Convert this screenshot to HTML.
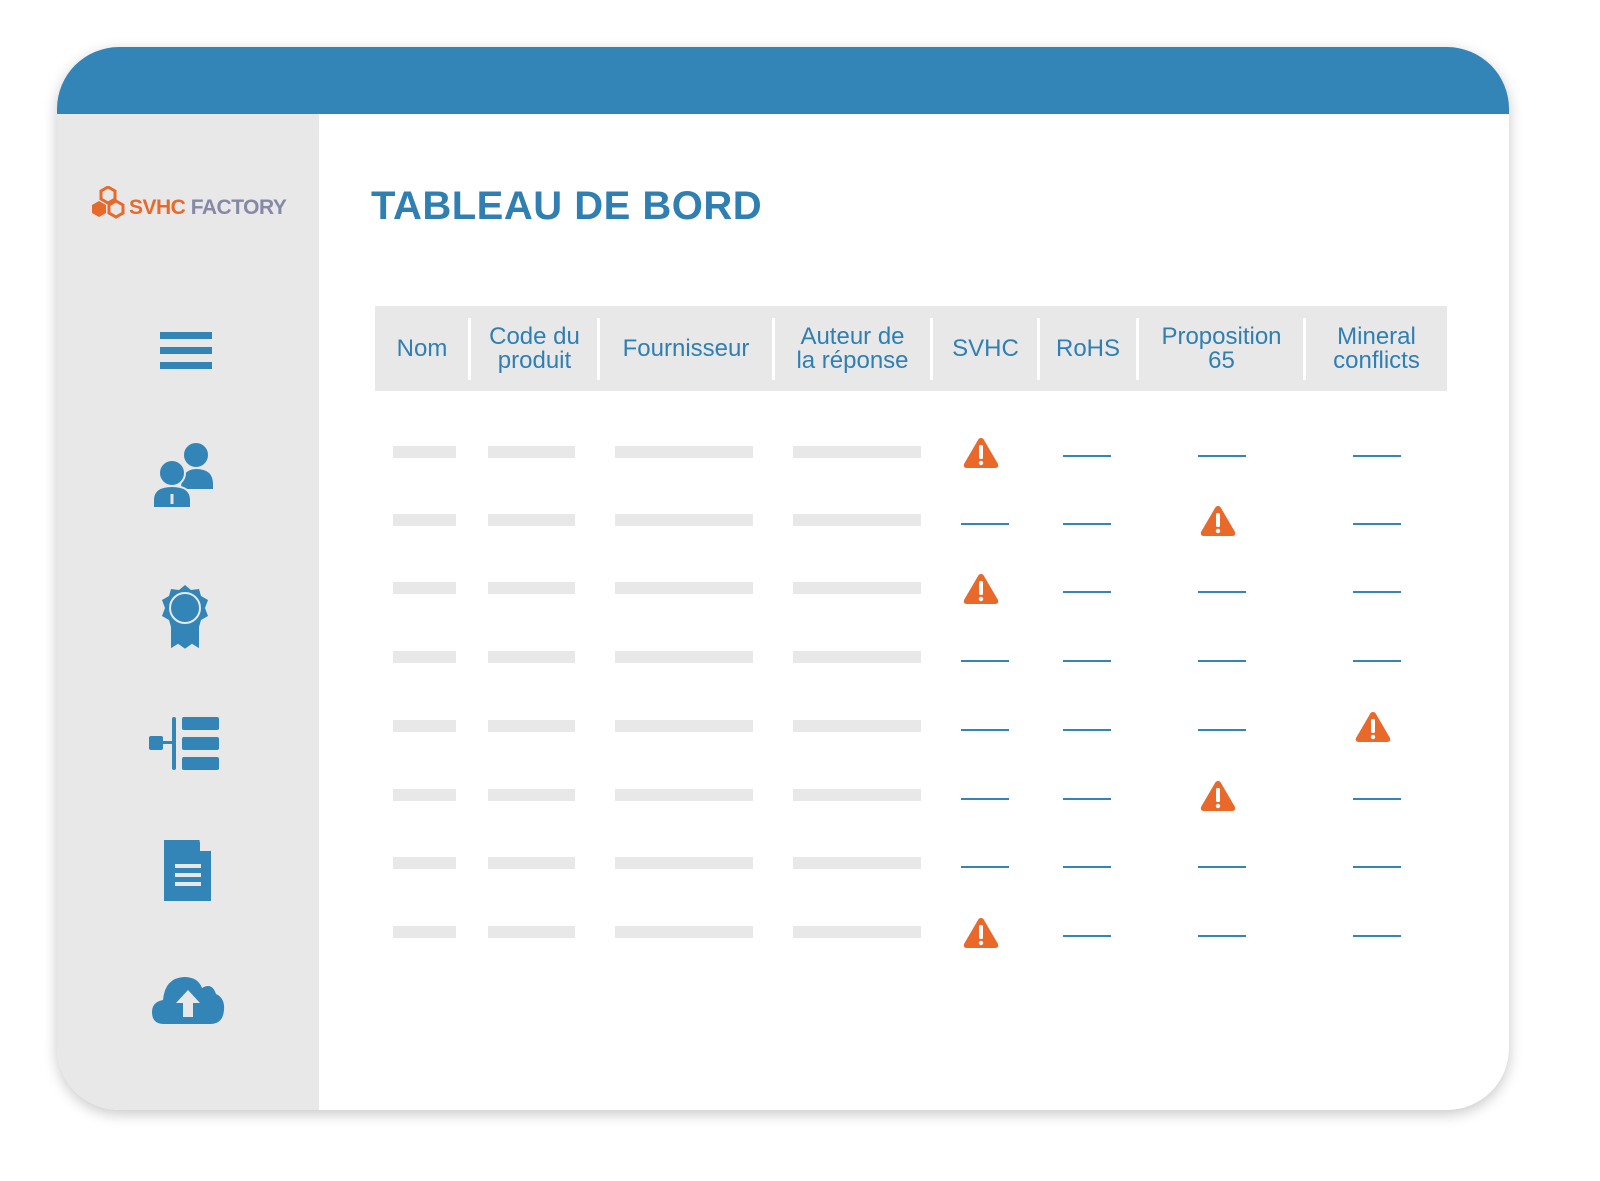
<!DOCTYPE html>
<html><head><meta charset="utf-8"><style>
*{margin:0;padding:0;box-sizing:border-box}
body{width:1600px;height:1181px;background:#fff;position:relative;overflow:hidden;font-family:"Liberation Sans",sans-serif}
.card{position:absolute;left:57px;top:47px;width:1452px;height:1063px;border-radius:62px;background:#fff;overflow:hidden;box-shadow:0 4px 14px rgba(0,0,0,.22)}
.top{position:absolute;left:0;top:0;width:100%;height:67px;background:#3385b7}
.side{position:absolute;left:0;top:67px;width:262px;height:996px;background:#e8e8e8}
.a{position:absolute}
.title{left:371px;top:184px;font-size:40px;font-weight:bold;color:#2f7fb3;letter-spacing:0.5px}
.hdr{left:375px;top:306px;width:1072px;height:85px;background:#e8e8e8}
.th{position:absolute;top:0;height:85px;display:flex;align-items:center;justify-content:center;text-align:center;color:#2f7fb3;font-size:24px;line-height:24px}
.dv{position:absolute;top:12px;width:3px;height:62px;background:#fff}
.g{position:absolute;height:12px;background:#e8e8e8}
.b{position:absolute;height:2px;background:#3385b7;width:48px}
</style></head><body>
<div class="card"><div class="top"></div><div class="side"></div></div>

<!-- logo -->
<svg class="a" style="left:90px;top:186px" width="36" height="34" viewBox="0 0 36 34">
<polygon points="18,1 25,5 25,13 18,17 11,13 11,5" fill="none" stroke="#e8692a" stroke-width="3"/>
<polygon points="9,15 16,19 16,27 9,31 2,27 2,19" fill="#e8692a"/>
<polygon points="26,15 33,19 33,27 26,31 19,27 19,19" fill="none" stroke="#e8692a" stroke-width="3"/>
</svg>
<div class="a" style="left:129px;top:196px;font-size:21px;font-weight:bold;letter-spacing:-0.5px"><span style="color:#e8692a">SVHC</span> <span style="color:#8589a5">FACTORY</span></div>

<!-- hamburger -->
<div class="a" style="left:160px;top:332px;width:52px;height:7px;background:#3385b7"></div>
<div class="a" style="left:160px;top:347px;width:52px;height:7px;background:#3385b7"></div>
<div class="a" style="left:160px;top:362px;width:52px;height:7px;background:#3385b7"></div>

<!-- users -->
<svg class="a" style="left:150px;top:440px" width="70" height="70" viewBox="0 0 70 70">
<circle cx="46" cy="15" r="13" fill="#3385b7" stroke="#e8e8e8" stroke-width="2"/>
<path d="M30 50 Q30 28 46 28 Q64 28 64 44 L64 50 Z" fill="#3385b7" stroke="#e8e8e8" stroke-width="2"/>
<circle cx="22" cy="33" r="13" fill="#3385b7" stroke="#e8e8e8" stroke-width="2"/>
<path d="M3 68 L3 60 Q3 46 22 46 Q41 46 41 60 L41 68 Z" fill="#3385b7" stroke="#e8e8e8" stroke-width="2"/>
<rect x="20.5" y="54" width="3" height="10" fill="#e8e8e8"/>
</svg>

<!-- badge -->
<svg class="a" style="left:158px;top:584px" width="54" height="68" viewBox="0 0 54 68">
<path d="M12 38 L12 66 L20 61 L27 66 L34 61 L42 66 L42 38 Z" fill="#3385b7" stroke="#e8e8e8" stroke-width="2"/>
<polygon points="27,1 33,6 41,5 43,12 50,16 47,24 50,32 43,36 41,43 33,42 27,47 21,42 13,43 11,36 4,32 7,24 4,16 11,12 13,5 21,6" fill="#3385b7"/>
<circle cx="27" cy="24" r="15" fill="none" stroke="#e8e8e8" stroke-width="2"/>
</svg>

<!-- tree -->
<svg class="a" style="left:148px;top:716px" width="74" height="56" viewBox="0 0 74 56">
<rect x="1" y="20" width="14" height="14" rx="2" fill="#3385b7"/>
<rect x="15" y="25" width="12" height="3" fill="#3385b7"/>
<rect x="24" y="1" width="4" height="53" rx="2" fill="#3385b7"/>
<rect x="34" y="1" width="37" height="13" rx="2" fill="#3385b7"/>
<rect x="34" y="21" width="37" height="13" rx="2" fill="#3385b7"/>
<rect x="34" y="41" width="37" height="13" rx="2" fill="#3385b7"/>
</svg>

<!-- document -->
<svg class="a" style="left:164px;top:840px" width="48" height="62" viewBox="0 0 48 62">
<path d="M0 0 L35 0 L47 11 L47 61 L0 61 Z" fill="#3385b7"/>
<path d="M36 0 L47 11 L36 11 Z" fill="#e8e8e8"/>
<path d="M36 1 L46 10" stroke="#e8e8e8" stroke-width="2"/>
<rect x="11" y="24" width="26" height="4" fill="#e8e8e8"/>
<rect x="11" y="33" width="26" height="4" fill="#e8e8e8"/>
<rect x="11" y="42" width="26" height="4" fill="#e8e8e8"/>
</svg>

<!-- cloud -->
<svg class="a" style="left:152px;top:976px" width="74" height="50" viewBox="0 0 74 50">
<path d="M12 48 Q0 48 0 36 Q0 26 11 24 Q13 2 32 1 Q46 1 50 12 Q60 6 64 18 Q73 22 72 34 Q71 48 58 48 Z" fill="#3385b7"/>
<path d="M36 14 L48 27 L41 27 L41 41 L31 41 L31 27 L24 27 Z" fill="#e8e8e8"/>
</svg>

<div class="a title">TABLEAU DE BORD</div>

<div class="a hdr">
<div class="th" style="left:0;width:94px">Nom</div>
<div class="dv" style="left:93px"></div>
<div class="th" style="left:96px;width:127px">Code du<br>produit</div>
<div class="dv" style="left:222px"></div>
<div class="th" style="left:225px;width:172px">Fournisseur</div>
<div class="dv" style="left:397px"></div>
<div class="th" style="left:400px;width:155px">Auteur de<br>la réponse</div>
<div class="dv" style="left:555px"></div>
<div class="th" style="left:558px;width:105px">SVHC</div>
<div class="dv" style="left:662px"></div>
<div class="th" style="left:665px;width:96px">RoHS</div>
<div class="dv" style="left:761px"></div>
<div class="th" style="left:764px;width:165px">Proposition<br>65</div>
<div class="dv" style="left:928px"></div>
<div class="th" style="left:931px;width:141px">Mineral<br>conflicts</div>
</div>

<div id="rows"></div>
<script>
var ys=[452,520,588,657,726,795,863,932];
var data=["W---","--W-","W---","----","---W","--W-","----","W---"];
var cx=[985,1087,1222,1377];
var h="";
var warn='<svg width="38" height="34" viewBox="0 0 38 34"><path d="M19 2 Q21 2 22 4 L36 28 Q37 32 33 32 L5 32 Q1 32 2 28 L16 4 Q17 2 19 2 Z" fill="#e8692a"/><rect x="17" y="9" width="4" height="14" rx="1.5" fill="#fff"/><circle cx="19" cy="27" r="2.2" fill="#fff"/></svg>';
for(var i=0;i<8;i++){var y=ys[i];
h+='<div class="g" style="left:393px;width:63px;top:'+(y-6)+'px"></div>';
h+='<div class="g" style="left:488px;width:87px;top:'+(y-6)+'px"></div>';
h+='<div class="g" style="left:615px;width:138px;top:'+(y-6)+'px"></div>';
h+='<div class="g" style="left:793px;width:128px;top:'+(y-6)+'px"></div>';
for(var j=0;j<4;j++){
if(data[i][j]=="W"){h+='<div class="a" style="left:'+(cx[j]-4-19)+'px;top:'+(y-16)+'px">'+warn+'</div>';}
else{h+='<div class="b" style="left:'+(cx[j]-24)+'px;top:'+(y+3)+'px"></div>';}
}}
document.getElementById("rows").innerHTML=h;
</script>
</body></html>
